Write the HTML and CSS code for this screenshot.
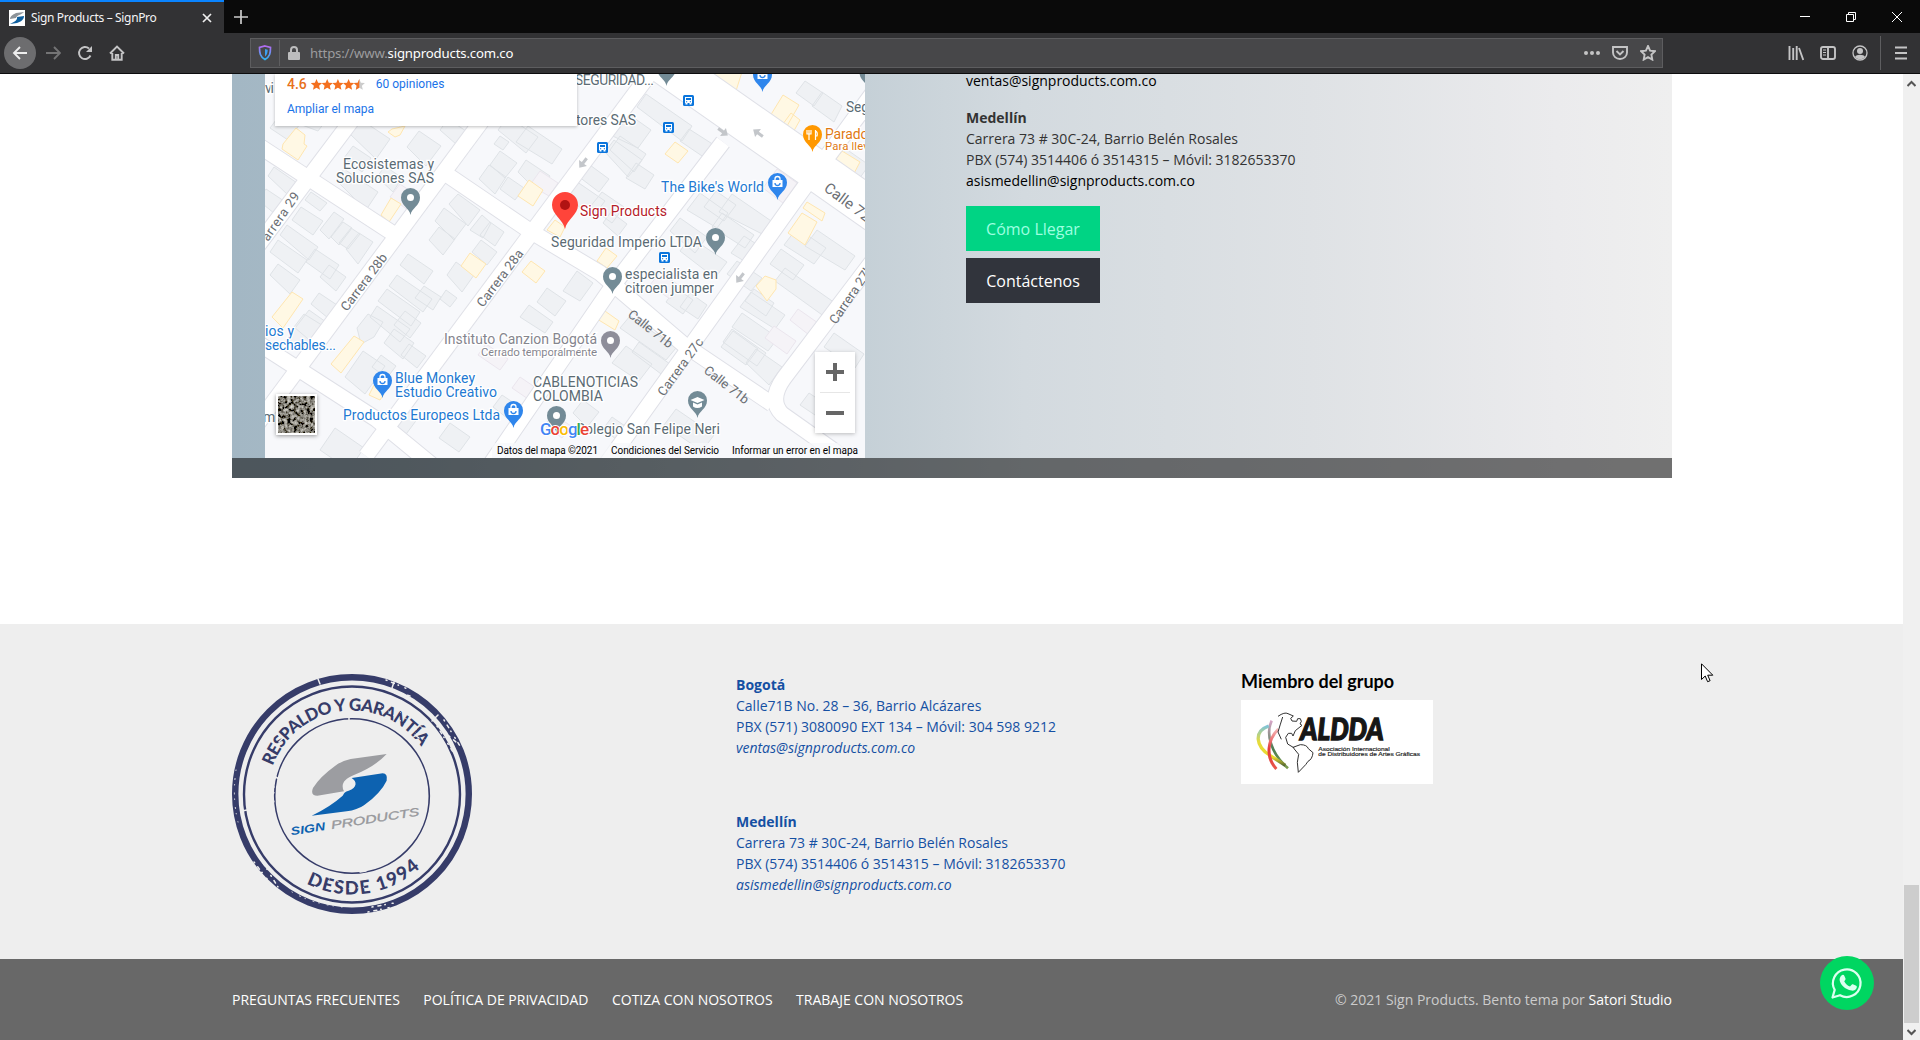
FILE: index.html
```html
<!DOCTYPE html>
<html lang="es">
<head>
<meta charset="utf-8">
<title>Sign Products – SignPro</title>
<link rel="stylesheet" href="styles.css">
</head>
<body>
<header class="browser">
  <div class="tabbar">
    <div class="tab">
      <svg class="favicon" viewBox="0 0 16 16"><path fill="#fff" d="M0 0h16v16H0z"/><path fill="#8d9399" d="M15 2C12 5 8 5 7 8L1 9c0-3 4-5 6-6z"/><path fill="#0f5f9e" d="M8 7l7-1c0 4-4 6-7 7l-7 1c4-2 8-4 7-7z"/></svg>
      <span class="tab-title">Sign Products – SignPro</span>
      <svg class="tab-close" viewBox="0 0 10 10"><path d="M1 1l8 8M9 1l-8 8" stroke="#eee" stroke-width="1.7"/></svg>
    </div>
    <svg class="newtab" viewBox="0 0 14 14"><path d="M7 0v14M0 7h14" stroke="#ccc" stroke-width="1.7"/></svg>
    <div class="window-controls">
      <svg viewBox="0 0 12 12"><path d="M1 5.5h10" stroke="#fff"/></svg>
      <svg viewBox="0 0 12 12"><path d="M1.500 3.500h7v7h-7zM3.500 3.500v-2h7v7h-2" fill="none" stroke="#fff"/></svg>
      <svg viewBox="0 0 12 12"><path d="M1 1l10 10M11 1L1 11" stroke="#fff"/></svg>
    </div>
  </div>
  <div class="toolbar">
    <div class="nav">
      <span class="back"><svg viewBox="0 0 16 16"><path d="M15 8H2M8 2L2 8l6 6"/></svg></span>
      <svg class="dim" viewBox="0 0 16 16"><path d="M1 8h13M9 2l6 6-6 6"/></svg>
      <svg viewBox="0 0 16 16"><path d="M13.500 10.500A6 6 0 1 1 12 3.500" /><path class="fill" d="M15 1v6H9z"/></svg>
      <svg viewBox="0 0 16 16"><path d="M1 8.500L8 1.500l7 7M3.300 8v6.700h9.400V8M6.800 14v-4h2.400v4"/></svg>
    </div>
    <div class="urlbar">
      <svg class="shield" viewBox="0 0 14 16"><defs><linearGradient id="sh" x2="0" y2="1"><stop stop-color="#b46bf0"/><stop offset="1" stop-color="#2fb3f5"/></linearGradient></defs><path d="M7 1l5.500 1.500c0 5.500-.5 9-5.500 12C2 11.500 1.500 8 1.500 2.500z" fill="none" stroke="url(#sh)" stroke-width="1.700"/><path d="M7 4v7.500c2-1.500 2.600-3.500 2.700-6.800z" fill="#3d9ff0"/></svg>
      <i class="sep"></i>
      <svg class="lock" viewBox="0 0 12 14"><path d="M3 7V4a3 3 0 0 1 6 0v3" fill="none" stroke="#bdbdbe" stroke-width="2"/><rect y="6" width="12" height="8" rx="1" fill="#bdbdbe"/></svg>
      <span class="url">https://www.<b>signproducts.com.co</b></span>
      <div class="page-actions">
        <svg viewBox="0 0 16 16"><g class="fill"><circle cx="2" cy="8" r="2"/><circle cx="8" cy="8" r="2"/><circle cx="14" cy="8" r="2"/></g></svg>
        <svg viewBox="0 0 16 16"><path d="M1 2h14v5.500a7 6.500 0 0 1-14 0zM4.500 6L8 9.500 11.500 6"/></svg>
        <svg viewBox="0 0 16 16"><path d="M8 1l2.100 4.600 4.900.6-3.600 3.400.9 5L8 12.200l-4.300 2.400.9-5L1 6.200l4.900-.6z"/></svg>
      </div>
    </div>
    <div class="tools">
      <svg viewBox="0 0 16 16"><path d="M1.500 1v14M5.200 3v12M8.700 1v14M11 3l4.300 12"/></svg>
      <svg viewBox="0 0 16 16"><rect x="1" y="2" width="14" height="12" rx="2"/><path d="M8 2v12"/><path stroke-width="1" d="M3 5h3M3 7.500h3M3 10h3"/></svg>
      <svg viewBox="0 0 16 16"><circle cx="8" cy="8" r="7" stroke-width="1.300"/><circle class="fill" cx="8" cy="6" r="3"/><path class="fill" d="M3 12c1-3 9-3 10 0-2 3-8 3-10 0z"/></svg>
      <i class="sep"></i>
      <svg viewBox="0 0 16 16"><path d="M2 2.500h12M2 8h12M2 13.500h12"/></svg>
    </div>
  </div>
</header>

<div class="viewport">
<main class="page">
  <section class="banner">
    <div class="banner-body">
      <div class="map">
        <svg class="map-canvas" viewBox="265 74 600 384">
          <defs>
            <g id="pin"><path d="M0 0C-1-7-9.500-9-9.500-17.500a9.500 9.500 0 0 1 19 0C9.500-9 1-7 0 0z"/></g>
            <g id="dot"><use href="#pin"/><circle cy="-17.500" r="3.500" fill="#fff"/></g>
            <g id="shop"><use href="#pin"/><path d="M-5-20H5v7H-5z" fill="#fff"/><path d="M-2.500-20v-1a2.500 2.500 0 0 1 5 0v1" fill="none" stroke="#fff" stroke-width="1.300"/><path d="M-2.500-17a2.500 2.500 0 0 0 5 0" fill="none" stroke="#2f86ec" stroke-width="1.300"/></g>
            <g id="bus"><rect x="-5.500" y="-5.500" width="11" height="11" rx="1.500" fill="#0b75dc"/><path fill="#fff" d="M-3.500-3.500h7v6h-7zM-3 2h2v2h-2zM1 2h2v2H1z"/><path fill="#0b75dc" d="M-2.500-2.500h5v2h-5zM-2.500.7h1.200v1h-1.200zM1.300.7h1.200v1H1.300z"/></g>
            <path id="arrow" d="M-6-1.500H0V-5l6 5-6 5V1.500h-6z" fill="#c3c6ca"/>
            <g id="roads" fill="none" stroke-linejoin="round">
              <path d="M388 72L235 276"/><path d="M518 72L232 458"/><path d="M651 72L366 456"/>
              <path d="M723 142L612 287 490 465"/><path d="M888 72L793 203 602 470"/>
              <path d="M885 80L823 163"/><path d="M890 238L784 378Q768 400 782 414L840 455"/>
              <path d="M250 140L400 238"/><path d="M449 176L530 231 600 273 683 344 772 404"/>
              <path d="M250 338L376 419 432 465"/>
            </g>
          </defs>
          <rect x="265" y="74" width="600" height="384" fill="#f7f8fb"/>
          <path fill="#eff1f4" stroke="#dfe3e7" d="M270 128l12-16 18 12-12 16zM294 122l14-18 20 14-10 13zM350 134l10-15 30 20-14 20zM344 158l9-12 18 12-9 14zM377 177l8-11 17 12-9 14zM336 180l8-11 34 23-12 18zM407 147l12-16 22 15-15 20zM440 130l8-11 18 12-10 13zM498 130l10-13 30 20-12 16zM516 142l12-16 34 23-10 15zM494 144l6-8 9 6-6 8zM490 165l10-14 17 12-12 15zM479 179l10-14 17 12-11 17zM500 189l8-12 16 11-9 12zM518 172l8-12 24 16-11 17zM268 176l6-9 23 16-9 12zM258 200l8-11 18 12-9 13zM305 200l6-8 16 11-7 8zM292 220l9-13 22 14-10 14zM280 235l7-10 31 22-9 13zM270 252l8-12 29 20-9 13zM320 230l14-18 10 7-15 20zM331 237l12-15 9 6-13 17zM339 243l12-15 9 6-12 15zM346 249l13-16 14 9-15 22zM306 262l9-13 24 16-9 14zM320 277l9-12 17 12-10 14zM270 275l8-11 22 16-10 14zM449 204l9-10 22 16-12 16zM435 221l9-13 22 16-12 16zM470 230l12-15 9 8-8 15zM480 235l10-13 14 10-9 14zM429 240l10-13 16 12-12 16zM472 252l9-12 16 12-10 13zM400 265l8-11 25 17-9 13zM447 275l9-13 18 13-12 17zM389 286l8-11 35 24-9 13zM378 301l9-12 33 23-9 14zM370 317l7-11 33 23-10 13zM415 298l9-12 17 11-8 13zM440 299l6-9 11 8-7 9zM357 328l11-14 15 8-9 15-13 7zM394 325l11-14 16 12-11 15zM384 343l10-14 20 14-11 16zM345 377l18-26 22 15-20 28zM372 367l9-12 15 11-9 12zM401 355l8-11 17 12-9 12zM286 340l23-30 17 12-23 29zM311 304l8-11 18 12-9 13zM294 327l10-13 21 13-11 17zM380 426l17-23 21 15-17 23zM320 450l15-22 29 20-15 22zM439 438l11-15 20 14-11 15zM493 407l9-12 24 16-10 14zM570 170l9-13 30 22-10 13zM560 190l10-13 35 24-13 17zM600 130l17-24 34 24-13 18zM610 150l10-14 26 18-12 18zM637 107l9-13 46 32-10 15zM680 141l9-12 25 16-9 13zM590 207l12-15 22 15-12 16zM605 152l9-12 28 20-14 17zM626 178l10-15 18 12-9 14zM603 223l8-11 16 12-9 12zM670 231l10-13 27 19-12 16zM687 210l13-17 28 20-11 15zM704 207l12-16 20 14-12 16zM719 212l13-18 45 31-9 12zM712 227l10-14 32 22-9 13zM680 251l10-14 37 25-12 16zM731 253l13-17 17 11-12 17zM727 274l10-13 25 17-11 13zM770 264l11-15 23 16-11 15zM784 245l13-17 29 20-12 16zM805 246l12-16 38 26-10 14zM775 281l10-13 50 35-10 14zM740 307l11-15 34 23-10 14zM732 327l10-14 36 25-10 13zM723 342l9-13 34 24-9 13zM721 347l12-16 25 18-12 16zM746 363l10-14 26 18-13 18zM745 301l9-12 20 14-8 13zM796 93l9-12 18 12-9 13zM812 106l10-14 20 14-8 16zM836 163l10-14 23 16-12 17zM563 291l14-20 16 12-13 18zM537 302l10-14 19 13-11 15zM520 317l9-12 24 17-8 11zM620 328l10-12 46 32-10 12zM632 352l7-10 38 27-8 11zM612 363l14-17 26 18-13 17zM666 302l10-14 17 12-10 14zM680 307l10-14 17 12-9 14zM573 413l10-13 16 12-12 15zM603 429l9-12 13 9-9 13zM664 425l12-16 38 26-12 16zM800 405l9-12 24 16-9 12zM824 347l10-14 30 21-9 14z"/>
          <path fill="#f5f3f7" stroke="#ebe6ee" d="M383 115l9-12 16 11-8 12zM390 197l10-13 22 15-10 14zM530 185l10-14 18 12-9 13zM478 355l8-11 22 15-8 11zM512 388l8-11 22 15-8 11zM650 285l10-13 20 14-10 13zM765 338l9-12 22 15-9 13zM790 320l8-11 20 14-9 12zM545 425l8-11 18 12-9 12zM763 188l14-19 20 14-14 20z"/>
          <path fill="#fff8e4" stroke="#ffe6b0" d="M283 144l13-16 9 7-1 9 3 2-9 14-16-11zM388 132l4-3 13-3-5 9-5 2zM381 215l10-17 10 6-12 18zM518 196l11-16 14 10-10 16zM461 266l9-13 16 11-10 14zM522 272l9-11 14 10-9 12zM272 317l20-25 11 7-20 29zM331 364l23-28 10 6-23 31zM369 395l5-10 10 9-4 6zM665 154l10-12 13 9-10 12zM597 261l9-13 11 8-10 12zM589 314l6-10 24 17-4 9zM547 230l8-10 10 7-5 10zM756 286l9-10 11 4 0 9-9 12zM767 121l16-26 16 10-16 28zM780 128l11-15 9 7-9 16zM832 164l10-13 18 11-9 17zM708 78l14-11 20 5-7 22zM788 233l14-20 15 9-12 23zM803 208l4-6 18 11-3 8z"/>
          <use href="#roads" stroke="#dfe0e7" stroke-width="17"/>
          <path d="M630 40L890 222" fill="none" stroke="#dfe0e7" stroke-width="42"/>
          <use href="#roads" stroke="#fff" stroke-width="15"/>
          <path d="M630 40L890 222" fill="none" stroke="#fff" stroke-width="40"/>
          <use href="#arrow" transform="translate(723 132) rotate(36)"/><use href="#arrow" transform="translate(758 133) rotate(216)"/>
          <use href="#arrow" transform="translate(583 163) rotate(128)"/><use href="#arrow" transform="translate(740 278) rotate(128)"/>
          <g class="street">
            <text transform="translate(268 242) rotate(-55)" textLength="56">arrera 29</text>
            <text transform="translate(347 312) rotate(-53)" textLength="68">Carrera 28b</text>
            <text transform="translate(483 308) rotate(-53)" textLength="68">Carrera 28a</text>
            <text transform="translate(664 397) rotate(-54)" textLength="68">Carrera 27c</text>
            <text transform="translate(836 325) rotate(-56)" textLength="68">Carrera 27b</text>
            <text transform="translate(627 316) rotate(38)" textLength="53">Calle 71b</text>
            <text transform="translate(703 372) rotate(38)" textLength="53">Calle 71b</text>
            <text class="big" transform="translate(823 190) rotate(37)" textLength="54">Calle 72</text>
          </g>
          <g fill="#738b96">
            <use href="#dot" x="410.500" y="215"/><use href="#dot" x="715.500" y="255"/><use href="#dot" x="612.500" y="294"/>
            <use href="#dot" x="666.500" y="86"/><use href="#dot" x="556.500" y="433"/><use href="#dot" x="869" y="90"/>
            <use href="#pin" x="697.500" y="418"/><path fill="#fff" d="M690.500 400l7-3 7 3-7 3zM693 402.500v4q4 3 9 0v-4l-4.500 2z"/>
          </g>
          <use href="#dot" x="610.500" y="358" fill="#8e8e9a"/>
          <g fill="#2f86ec"><use href="#shop" x="777.500" y="200"/><use href="#shop" x="762.500" y="92"/><use href="#shop" x="382.500" y="398"/><use href="#shop" x="513.500" y="428"/></g>
          <use href="#pin" x="812.500" y="152" fill="#ff9800"/><path d="M809 130v4m0 0v6m-2-10v4h4v-4M815.500 130v10m0-9q2.500 1 1.500 5h-1.500" stroke="#fff" stroke-width="1.200" fill="none"/>
          <use href="#bus" x="688.500" y="100.500"/><use href="#bus" x="668.500" y="127.500"/><use href="#bus" x="602.500" y="147.500"/><use href="#bus" x="664.500" y="257.500"/>
          <path fill="#ff443a" d="M565 229c-2-10-13-14-13-24a13 13 0 0 1 26 0c0 10-11 14-13 24z"/><circle cx="565" cy="205" r="5" fill="#b11313"/>
          <g class="label">
            <text x="265" y="93" textLength="9">vi</text>
            <text x="343" y="169" textLength="91">Ecosistemas y</text><text x="336" y="183" textLength="98">Soluciones SAS</text>
            <text x="575" y="85" textLength="79">SEGURIDAD...</text><text x="576" y="125" textLength="60">tores SAS</text>
            <text x="846" y="112" textLength="50">Seguros</text>
            <text x="551" y="247" textLength="151">Seguridad Imperio LTDA</text>
            <text x="625" y="279" textLength="93">especialista en</text><text x="625" y="293" textLength="89">citroen jumper</text>
            <text x="533" y="387" textLength="105">CABLENOTICIAS</text><text x="533" y="401" textLength="70">COLOMBIA</text>
            <text x="576" y="434" textLength="144">Colegio San Felipe Neri</text><text x="263" y="422">m</text>
          </g>
          <g class="label closed"><text x="444" y="344" textLength="153">Instituto Canzion Bogotá</text><text class="sub" x="481" y="356" textLength="116">Cerrado temporalmente</text></g>
          <g class="label shop">
            <text x="661" y="192" textLength="103">The Bike's World</text><text x="265" y="336" textLength="29">ios y</text><text x="265" y="350" textLength="71">sechables...</text>
            <text x="395" y="383" textLength="80">Blue Monkey</text><text x="395" y="397" textLength="102">Estudio Creativo</text><text x="343" y="420" textLength="157">Productos Europeos Ltda</text>
          </g>
          <g class="label food"><text x="825" y="139" textLength="50">Paradox</text><text class="sub" x="825" y="150" textLength="54">Para llevar</text></g>
          <g class="label main"><text x="580" y="216" textLength="87">Sign Products</text></g>
          <text class="google" x="540" y="435" textLength="49"><tspan fill="#4285f4">G</tspan><tspan fill="#ea4335">o</tspan><tspan fill="#fbbc05">o</tspan><tspan fill="#4285f4">g</tspan><tspan fill="#34a853">l</tspan><tspan fill="#ea4335">e</tspan></text>
          <rect x="492" y="443" width="373" height="15" fill="#f7f8fb" opacity=".75"/>
          <g class="terms"><text x="497" y="454" textLength="101">Datos del mapa ©2021</text><text x="611" y="454" textLength="108">Condiciones del Servicio</text><text x="732" y="454" textLength="126">Informar un error en el mapa</text></g>
        </svg>
        <div class="place-card">
          <div class="rating"><b>4.6</b>
            <svg viewBox="0 0 54 11"><defs><path id="st" d="M5.500 0l1.600 3.700 4 .4-3 2.700.9 4-3.500-2.100L2 10.800l.9-4-3-2.700 4-.4z"/></defs><g fill="#f4701f"><use href="#st"/><use href="#st" x="10.700"/><use href="#st" x="21.400"/><use href="#st" x="32.100"/></g><use href="#st" x="42.800" fill="#ccc"/><path fill="#f4701f" d="M48.300 0v8.700l-3.500 2.100.9-4-3-2.700 4-.4z"/></svg>
            <a>60 opiniones</a></div>
          <a>Ampliar el mapa</a>
        </div>
        <svg class="satellite" viewBox="0 0 38 38"><filter id="rock"><feTurbulence type="fractalNoise" baseFrequency=".3" numOctaves="3" seed="4"/><feColorMatrix values="1.3 0 0 0 -.42 1.28 0 0 0 -.42 1.2 0 0 0 -.41 0 0 0 0 1"/></filter><rect width="38" height="38" filter="url(#rock)"/></svg>
        <svg class="zoom-box" viewBox="0 0 40 81"><path d="M11 20h18M20 11v18M11 61h18" stroke="#666" stroke-width="4"/><path d="M5 40.500h30" stroke="#e6e6e6"/></svg>
      </div>
      <div class="info">
        <a class="mail">ventas@signproducts.com.co</a>
        <p><b>Medellín</b><br>Carrera 73 # 30C-24, Barrio Belén Rosales<br>PBX (574) 3514406 ó 3514315 – Móvil: 3182653370<br><a>asismedellin@signproducts.com.co</a></p>
        <a class="btn green">Cómo Llegar</a>
        <a class="btn dark">Contáctenos</a>
      </div>
    </div>
    <div class="banner-strip"></div>
  </section>

  <footer>
    <div class="widgets">
      <svg class="stamp" viewBox="0 0 240 240">
        <defs><path id="arcTop" d="M40.600 92.100A84.500 84.500 0 0 1 190 73.800"/><path id="arcBottom" d="M74.500 209.500A100 100 0 0 0 190 192"/></defs>
        <g fill="none" stroke="#363c69"><circle cx="120" cy="120" r="116.800" stroke-width="6.400"/><circle cx="120" cy="120.500" r="108" stroke-width="2.400"/><circle cx="120" cy="122" r="77.300" stroke-width="1.600"/></g>
        <g class="seal"><text class="top"><textPath href="#arcTop" textLength="184">RESPALDO Y GARANTÍA</textPath></text><text><textPath href="#arcBottom" textLength="122">DESDE 1994</textPath></text></g>
        <g fill="none" stroke="#eee" stroke-linecap="round">
          <path stroke-width="1.500" stroke-dasharray="1 5 3 4 .5 7" d="M212 46l16 26M205 52l16 26M217 62l14 12M22 188l20 26M28 184l18 29M36 210l-10-16M154 6l24 10M150 14l28 8M140 233l22-4M136 238l24-5"/>
          <path stroke-width="1.500" d="M86 5l2 5M10 137l5-1M162 8l-2 6M47 68l4-4M117 42v6M128 198l6-1M42 102l5 3M183 61l4 3M200 47l6-6"/>
          <path stroke-width="1" stroke-dasharray=".5 8 1 5" d="M4 96q-4 28 2 52M74 211l30 5 40-4M150 32l35 28M168 38l30 33M60 218q20 12 50 15M83 201l26 7M42 104v26"/>
        </g>
        <g transform="translate(-12 -14) scale(.33333)">
          <path fill="#9c9da1" d="M500 282Q465 320 402 345C370 357 362 375 372 394L292 407Q270 406 279 384 300 350 345 318 365 302 392 297z"/>
          <path fill="#0d62b0" d="M395 354L488 340Q504 341 500 362 482 400 432 436 412 450 380 454L275 467Q330 441 368 407C374 395 380 394 386 392 412 384 412 364 395 354z"/>
          <g class="brand" transform="translate(214 526) rotate(-8.800)"><text fill="#0d62b0" textLength="104" lengthAdjust="spacingAndGlyphs" font-weight="700">SIGN</text><text class="thin" x="123" fill="#97989c" textLength="267" lengthAdjust="spacingAndGlyphs">PRODUCTS</text></g>
        </g>
      </svg>
      <div class="contacts">
        <p><b>Bogotá</b><br>Calle71B No. 28 – 36, Barrio Alcázares<br>PBX (571) 3080090 EXT 134 – Móvil: 304 598 9212<br><em>ventas@signproducts.com.co</em></p>
        <p><b>Medellín</b><br>Carrera 73 # 30C-24, Barrio Belén Rosales<br>PBX (574) 3514406 ó 3514315 – Móvil: 3182653370<br><em>asismedellin@signproducts.com.co</em></p>
      </div>
      <div class="member">
        <h3>Miembro del grupo</h3>
        <svg class="aldda" viewBox="62 151 576 252">
          <defs><linearGradient id="g1" x2="0" y2="1"><stop stop-color="#7fc4d8"/><stop offset=".4" stop-color="#e6dc3c"/><stop offset=".8" stop-color="#e9d92b"/><stop offset="1" stop-color="#596b34"/></linearGradient><linearGradient id="g2" x2="0" y2="1"><stop stop-color="#f6b8b8"/><stop offset=".5" stop-color="#e2383a"/><stop offset="1" stop-color="#e8574a"/></linearGradient><linearGradient id="g3" x2="0" y2="1"><stop stop-color="#d9a7c9"/><stop offset=".6" stop-color="#4b7c50"/><stop offset="1" stop-color="#7c9c50"/></linearGradient></defs>
          <path fill="#fff" d="M62 151h576v252H62z"/>
          <g fill="none"><path stroke="url(#g3)" stroke-width="8" d="M154 213C136 250 150 310 203 356"/><path stroke="url(#g1)" stroke-width="10" d="M145 229C100 245 105 290 150 318L195 347"/><path stroke="url(#g2)" stroke-width="9" d="M174 238C142 270 134 320 168 358"/></g>
          <path fill="none" stroke="#333" stroke-width="3" stroke-linejoin="round" d="M173 200q20-14 30-8l16 7-8 7 4 8 14 1 3-8 8 0 3 8-4 8 6 4-20 16-7 16-4-8-10 0-8 12 6 20 20 12M187 202q-8 25-14 45l10 22M218 293l22-8q20 0 24 12l14 12q-2 20-15 26l-7 10-22 23-3-30 4-24-14-17z"/>
          <text class="aldda-name" x="240" y="270" textLength="250" lengthAdjust="spacingAndGlyphs">ALDDA</text>
          <g class="aldda-sub"><text x="294" y="304" textLength="214" lengthAdjust="spacingAndGlyphs">Asociación Internacional</text><text x="294" y="319" textLength="305" lengthAdjust="spacingAndGlyphs">de Distribuidores de Artes Gráficas</text></g>
        </svg>
      </div>
    </div>
    <div class="bottom">
      <nav><a>Preguntas frecuentes</a><a>Política de privacidad</a><a>Cotiza con nosotros</a><a>Trabaje con nosotros</a></nav>
      <p>© 2021 Sign Products. Bento tema por <a>Satori Studio</a></p>
    </div>
  </footer>
</main>
<div class="scrollbar">
  <svg viewBox="0 0 9 7"><path d="M.5 6l4-4 4 4"/></svg>
  <div class="thumb"></div>
  <svg viewBox="0 0 9 7"><path d="M.5 1l4 4 4-4"/></svg>
</div>
</div>

<svg class="whatsapp" viewBox="0 0 54 54"><circle cx="27" cy="27" r="27" fill="#00d661"/><path d="M12.500 41.500l2.200-7.600a13.800 13.800 0 1 1 5.300 5.300z" fill="none" stroke="#dcfff0" stroke-width="2.200" stroke-linejoin="round"/><path fill="#dcfff0" d="M21.500 19.500c1-1 2.400-.8 2.800.2l1.200 2.900c.3 1-.3 1.600-1.300 2.700 1.300 2.600 3.200 4.200 5.800 5.300l1.900-2.100c.5-.5 1-.4 1.500-.1l2.800 1.400c.8.5.7 1 .5 1.900-.7 2.400-3.100 3.200-5.200 2.900-6.500-1-11.500-6.400-11.900-10.600 0-2 .8-3.500 1.900-4.500z"/></svg>
<svg class="cursor" viewBox="0 0 13 20"><path d="M.5.800v15.700l3.700-3.500 2.400 5.700 2.500-1-2.400-5.500h5.100z" fill="#fff" stroke="#000"/></svg>
</body>
</html>
```
FILE: styles.css
```css
* { box-sizing: border-box; }
body { margin: 0; height: 1040px; overflow: hidden; display: flex; flex-direction: column; background: #fff; font: 14px/21px "Open Sans", sans-serif; color: #333; }
p, h3 { margin: 0; }
svg { display: block; flex: none; }

/* Browser frame */
.browser { height: 74px; flex: none; border-bottom: 1px solid #0c0c0d; font-family: "Noto Sans", sans-serif; }
.tabbar { height: 33px; background: #0a0a0a; display: flex; align-items: center; }
.tab { width: 224px; height: 33px; background: #323234; border-top: 2px solid #0a84ff; display: flex; align-items: center; padding: 0 12px 0 9px; }
.favicon { width: 16px; height: 16px; }
.tab-title { margin-left: 6px; flex: 1; font-size: 12px; letter-spacing: -.35px; color: #f4f4f4; white-space: nowrap; }
.tab-close { width: 10px; height: 10px; }
.newtab { width: 14px; height: 14px; margin-left: 10px; }
.window-controls { margin-left: auto; display: flex; gap: 34px; padding-right: 17px; }
.window-controls svg { width: 12px; height: 12px; }
.toolbar { height: 40px; background: #323234; display: flex; align-items: center; }
.toolbar svg { width: 16px; height: 16px; fill: none; stroke: #c4c4c5; stroke-width: 1.9; }
.toolbar .fill { fill: #c4c4c5; stroke: none; }
.nav { width: 250px; display: flex; align-items: center; gap: 16px; padding-left: 4px; }
.back { width: 32px; height: 32px; border-radius: 50%; background: #6d6d6f; display: grid; place-items: center; margin-right: -7px; }
.back svg { stroke: #eee !important; }
.dim { opacity: .45; }
.urlbar { width: 1413px; height: 30px; background: #474749; border: 1px solid #5d5d5f; display: flex; align-items: center; padding: 0 6px 0 7px; }
.urlbar .shield { width: 14px; stroke: none; }
.sep { width: 1px; height: 26px; background: #5e5e60; margin-left: 7px; }
.urlbar .lock { width: 12px; height: 14px; margin-left: 8px; stroke: none; }
.url { margin-left: 10px; padding-top: 1px; font-size: 13.2px; color: #9c9c9e; white-space: nowrap; letter-spacing: -.17px; }
.url b { font-weight: 400; color: #fff; }
.page-actions { margin-left: auto; display: flex; gap: 12px; }
.tools { margin-left: auto; display: flex; align-items: center; gap: 16px; padding-right: 11px; }
.tools .sep { margin: 0 -4px; height: 34px; }

/* Page and scrollbar */
.viewport { flex: 1; display: flex; min-height: 0; }
.page { width: 1903px; display: flex; flex-direction: column; }
.scrollbar { width: 17px; background: #f0f0f0; display: flex; flex-direction: column; align-items: center; padding: 6px 0 4px; }
.scrollbar svg { width: 9px; height: 7px; fill: none; stroke: #555; stroke-width: 2; }
.thumb { width: 15px; height: 138px; background: #cdcdcd; margin: auto 0 6px; }

/* Location banner */
.banner { width: 1440px; height: 404px; margin-left: 232px; background: linear-gradient(90deg, #a3b7c4, #a9bbc6 12%, #c5d0d7 44%, #d3dadf 55%, #dfe2e5 75%, #ebebed 92%, #efefef); }
.banner-body { display: flex; height: 384px; padding-left: 33px; }
.banner-strip { height: 20px; background: rgba(0, 0, 0, .53); }
.map { width: 600px; height: 384px; position: relative; overflow: hidden; }
.map-canvas { width: 600px; height: 384px; font-family: Roboto, sans-serif; }
.label { font-size: 14px; fill: #5b6b74; stroke: #fff; stroke-width: 2.5px; paint-order: stroke; }
.label.closed { fill: #85858e; }
.label.shop { fill: #2279d2; }
.label.food { fill: #df7913; }
.label.main { fill: #b5202a; }
.sub { font-size: 11.5px; }
.street { font-size: 13px; fill: #6a6e73; }
.street .big { font-size: 15px; }
.google { font: 500 17px Roboto, sans-serif; stroke: #fff; stroke-width: 2px; paint-order: stroke; }
.terms { font-size: 10px; fill: #000; }
.place-card { position: absolute; left: 10px; top: 0; width: 302px; height: 52px; background: #fff; padding: 0 12px; font: 12px/20px Roboto, sans-serif; color: #1a73e8; box-shadow: 0 1px 3px rgba(0, 0, 0, .25); }
.rating { display: flex; align-items: center; height: 20px; margin-bottom: 5px; }
.rating b { font-weight: 500; font-size: 14px; color: #e7711b; }
.rating svg { width: 54px; height: 11px; margin: 0 11px 0 4px; }
.satellite { position: absolute; left: 11px; top: 320px; width: 41px; height: 41px; border: 2px solid #fff; background: #777; box-shadow: 0 1px 4px rgba(0, 0, 0, .4); }
.zoom-box { position: absolute; left: 550px; top: 278px; width: 40px; height: 81px; background: #fff; box-shadow: 0 1px 4px rgba(0, 0, 0, .25); }
.info { padding: 0 0 0 101px; margin-top: -4px; display: flex; flex-direction: column; align-items: flex-start; }
.info a { color: #000; }
.info p { margin: 16px 0 15px; }
.info .btn { width: 134px; height: 45px; font-size: 16px; line-height: 46px; text-align: center; color: #fff; background: #31343c; }
.info .green { background: #00d484; color: #9dffe0; margin-bottom: 7px; }

/* Footer */
footer { margin-top: auto; }
.widgets { height: 335px; background: #eee; padding: 50px 0 0 232px; display: grid; grid-template-columns: 504px 505px auto; align-items: start; }
.stamp { width: 240px; height: 240px; }
.seal { font: 900 18.500px Lato, sans-serif; fill: #363c69; }
.seal .top { font-size: 17px; }
.brand { font: italic 700 34px "Liberation Sans", sans-serif; }
.brand .thin { font-weight: 400; stroke: #97989c; stroke-width: 1; }
.contacts { color: #1550a3; }
.contacts p { margin-bottom: 53px; }
.member h3 { font: 700 18px/22px Lato, sans-serif; color: #000; margin: -4px 0 8px; }
.aldda { width: 192px; height: 84px; }
.aldda-name { font: italic 900 90px Lato, sans-serif; fill: #161616; stroke: #161616; stroke-width: 4px; }
.aldda-sub { font: 13.500px "Liberation Sans", sans-serif; fill: #222; stroke: #222; stroke-width: .4px; }
.bottom { height: 81px; background: #686868; padding: 0 231px 0 232px; display: flex; justify-content: space-between; align-items: center; color: #ccc; }
.bottom nav { display: flex; gap: 23.5px; text-transform: uppercase; }
.bottom a { color: #fff; }

.whatsapp { position: absolute; left: 1820px; top: 956px; width: 54px; height: 54px; }
.cursor { position: absolute; left: 1701px; top: 663px; width: 13px; height: 20px; }
```
